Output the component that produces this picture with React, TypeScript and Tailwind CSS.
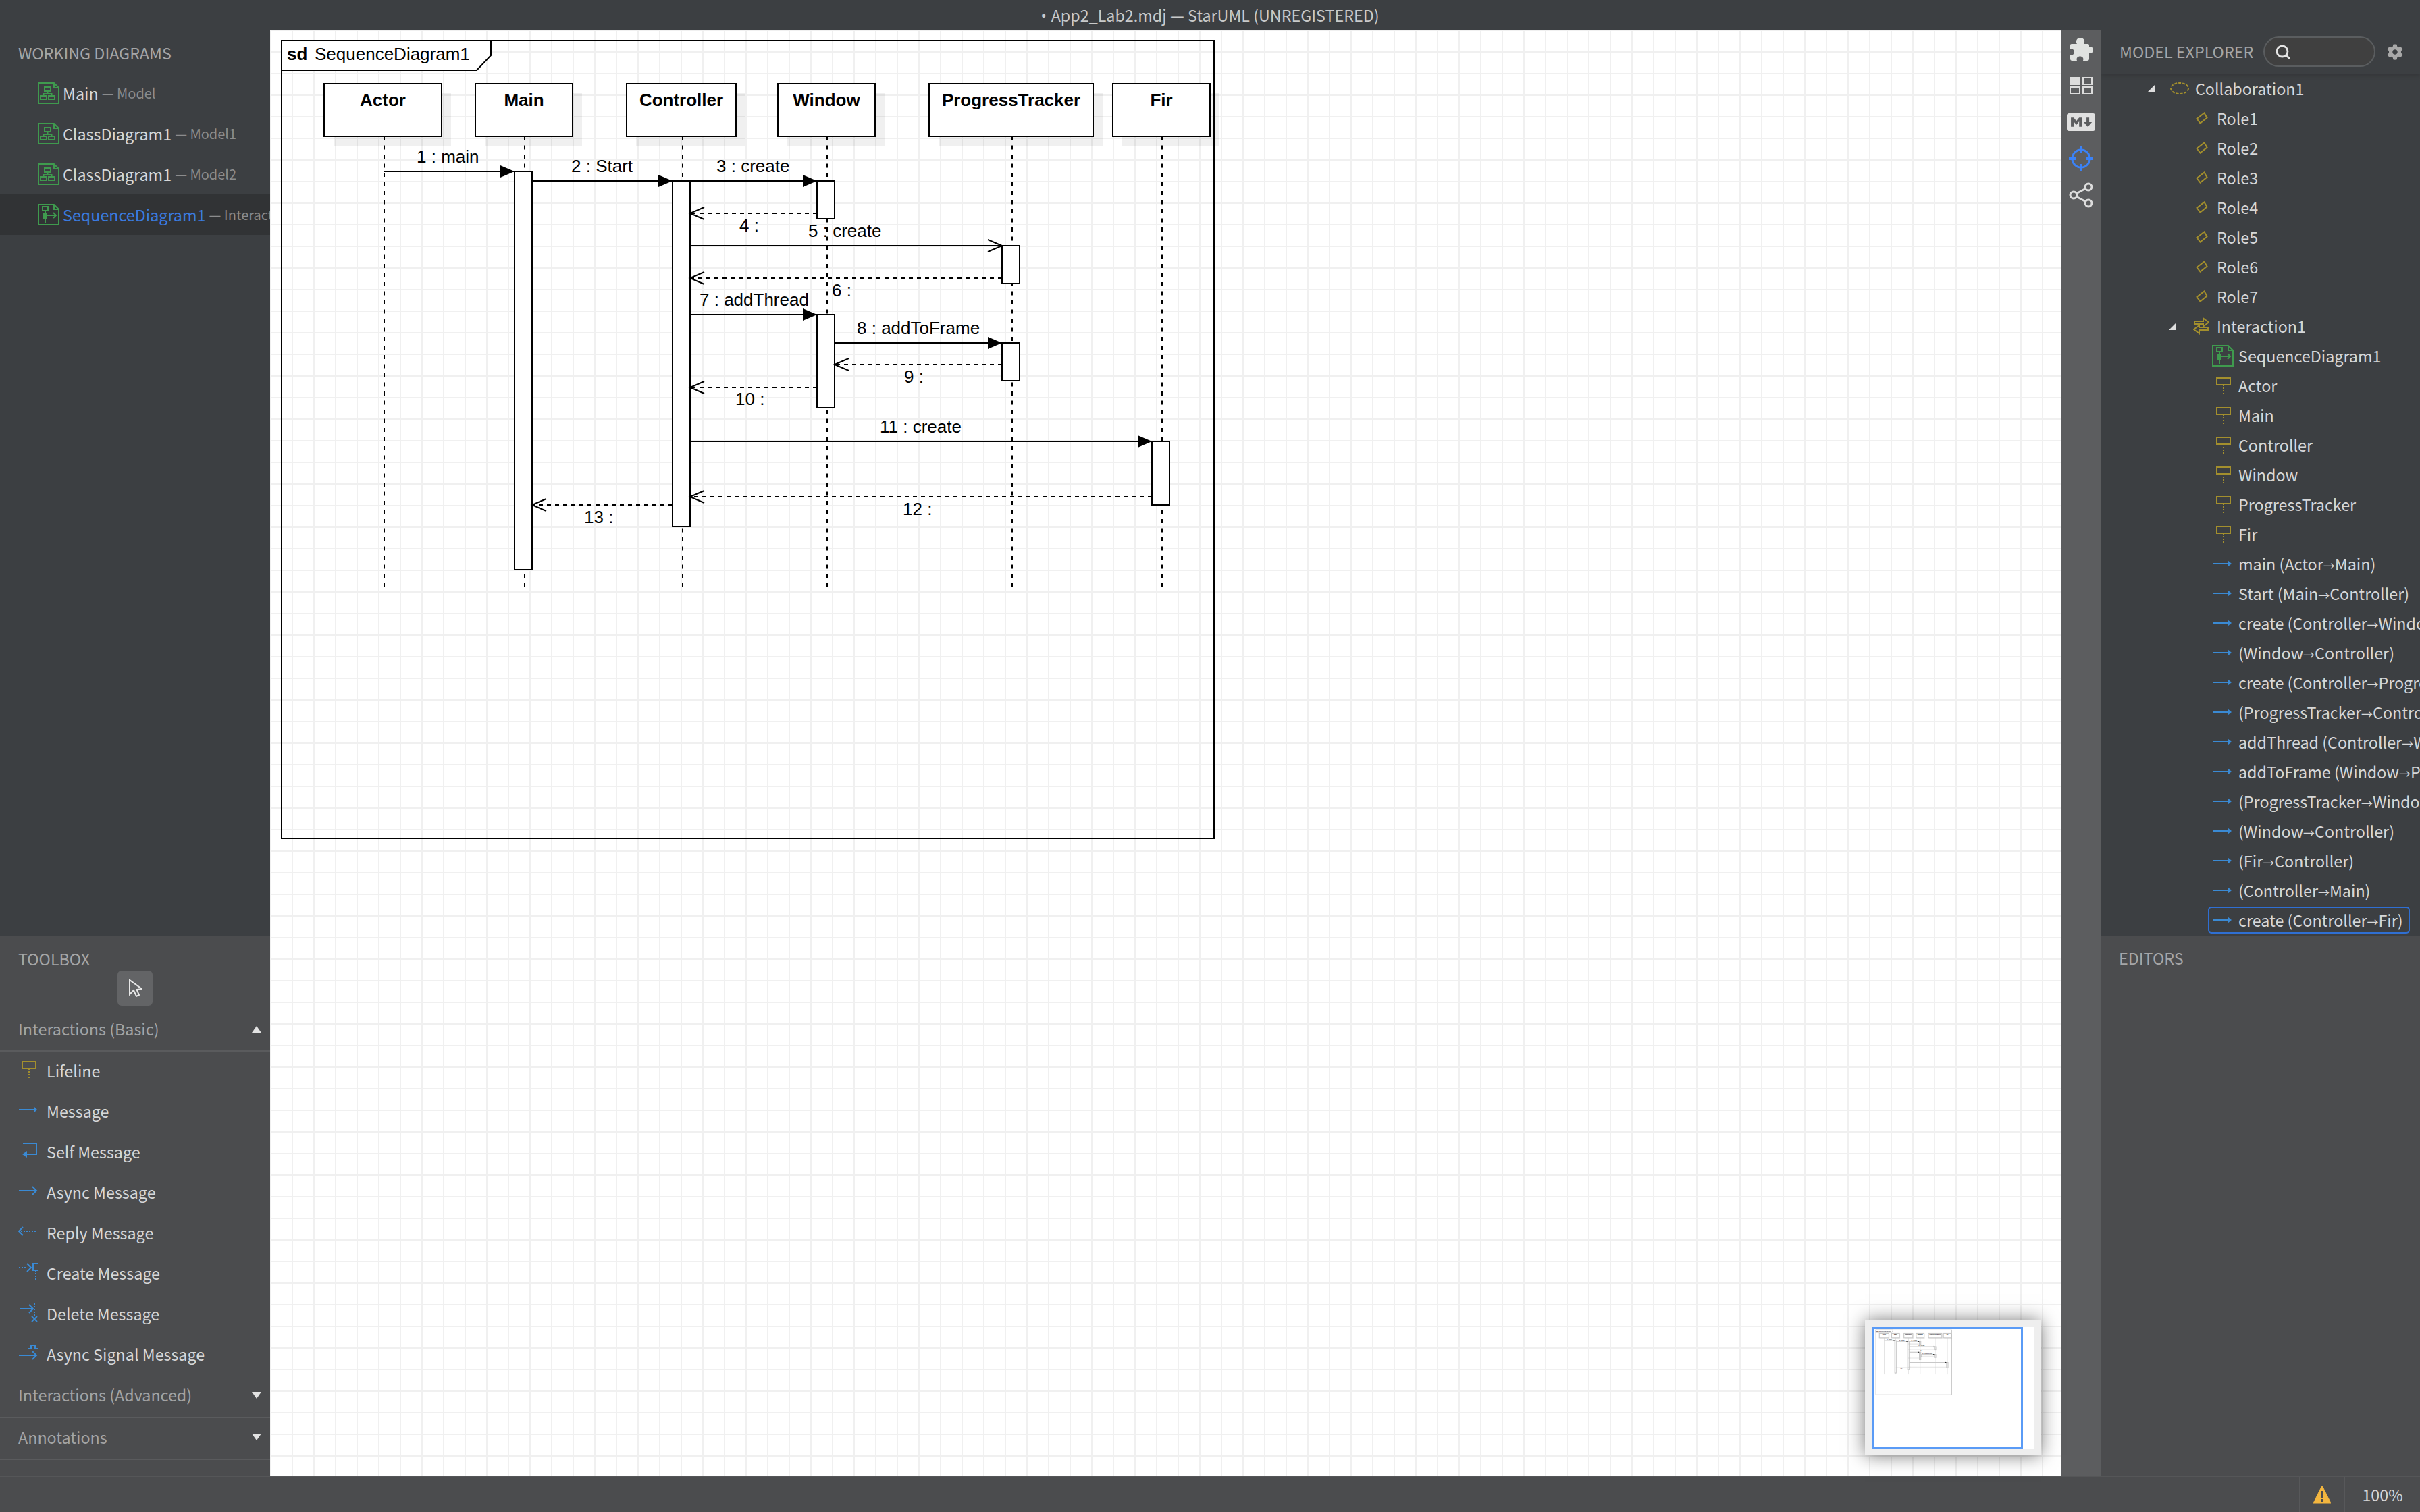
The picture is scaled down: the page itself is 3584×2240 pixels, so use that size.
import { Fragment } from 'react';
import { Search } from 'lucide-react';
import { FaCog, FaMarkdown } from 'react-icons/fa';

const GREEN = '#3f9a4e';
const GOLD = '#a38f2d';
const BLUE = '#3a8ad4';

/* ---------- sequence diagram data, in screen pixels ---------- */

const LIFELINES = [
  { name: 'Actor', left: 480, right: 654, line: 569 },
  { name: 'Main', left: 704, right: 848, line: 777 },
  { name: 'Controller', left: 928, right: 1090, line: 1011 },
  { name: 'Window', left: 1152, right: 1296, line: 1225 },
  { name: 'ProgressTracker', left: 1376, right: 1619, line: 1499 },
  { name: 'Fir', left: 1648, right: 1792, line: 1721 },
];

const ACTIVATIONS = [
  { x: 762, top: 254, bottom: 844 },
  { x: 996, top: 268, bottom: 780 },
  { x: 1210, top: 268, bottom: 324 },
  { x: 1484, top: 364, bottom: 420 },
  { x: 1210, top: 466, bottom: 604 },
  { x: 1484, top: 508, bottom: 564 },
  { x: 1706, top: 654, bottom: 748 },
];

type MessageKind = 'call' | 'async' | 'reply';

const MESSAGES: { from: number; to: number; y: number; kind: MessageKind; label: string; lx: number; ly: number }[] = [
  { from: 569, to: 762, y: 254, kind: 'call', label: '1 : main', lx: 617, ly: 241 },
  { from: 788, to: 996, y: 268, kind: 'call', label: '2 : Start', lx: 846, ly: 255 },
  { from: 1022, to: 1210, y: 268, kind: 'call', label: '3 : create', lx: 1061, ly: 255 },
  { from: 1210, to: 1022, y: 316, kind: 'reply', label: '4 :', lx: 1095, ly: 343 },
  { from: 1022, to: 1484, y: 364, kind: 'async', label: '5 : create', lx: 1197, ly: 351 },
  { from: 1484, to: 1022, y: 412, kind: 'reply', label: '6 :', lx: 1232, ly: 439 },
  { from: 1022, to: 1210, y: 466, kind: 'call', label: '7 : addThread', lx: 1036, ly: 453 },
  { from: 1236, to: 1484, y: 508, kind: 'call', label: '8 : addToFrame', lx: 1269, ly: 495 },
  { from: 1484, to: 1236, y: 540, kind: 'reply', label: '9 :', lx: 1339, ly: 567 },
  { from: 1210, to: 1022, y: 574, kind: 'reply', label: '10 :', lx: 1089, ly: 600 },
  { from: 1022, to: 1706, y: 654, kind: 'call', label: '11 : create', lx: 1303, ly: 641 },
  { from: 1706, to: 1022, y: 736, kind: 'reply', label: '12 :', lx: 1337, ly: 763 },
  { from: 996, to: 788, y: 748, kind: 'reply', label: '13 :', lx: 865, ly: 775 },
];

function Message({ from, to, y, kind, ink, width }: { from: number; to: number; y: number; kind: MessageKind; ink: string; width: number }) {
  const dir = to > from ? -1 : 1;
  return (
    <g>
      <line x1={from} x2={to} y1={y} y2={y} stroke={ink} strokeWidth={width} strokeDasharray={kind === 'reply' ? '6 6' : undefined} />
      {kind === 'call' ? (
        <polygon points={`${to},${y} ${to + dir * 21},${y - 9} ${to + dir * 21},${y + 9}`} fill="#000" />
      ) : (
        <polyline points={`${to + dir * 21},${y - 9} ${to},${y} ${to + dir * 21},${y + 9}`} fill="none" stroke={ink} strokeWidth={width} />
      )}
    </g>
  );
}

// the minimap reuses this with a heavier, paler line
function Diagram({ className, ink = '#000', width = 2 }: { className: string; ink?: string; width?: number }) {
  return (
    <svg viewBox="400 44 2652 2142" className={className} fontFamily="'Liberation Sans', Arial, sans-serif" fontSize={26}>
      <rect x={417} y={60} width={1381} height={1182} fill="none" stroke={ink} strokeWidth={width} />
      <path d="M417 60 H727 V82 L706 104 H417 Z" fill="#fff" stroke={ink} strokeWidth={width} />
      <text x={425} y={89} fontWeight={700}>sd</text>
      <text x={466} y={89}>SequenceDiagram1</text>

      {LIFELINES.map((l) => (
        <rect key={l.name} x={l.left + 14} y={138} width={l.right - l.left} height={78} fill="#000" fillOpacity={0.06} />
      ))}
      {LIFELINES.map((l) => (
        <line key={l.name} x1={l.line} x2={l.line} y1={202} y2={870} stroke={ink} strokeWidth={Math.min(width, 6)} strokeDasharray={width > 2 ? undefined : '6 7.5'} />
      ))}
      {LIFELINES.map((l) => (
        <g key={l.name}>
          <rect x={l.left} y={124} width={l.right - l.left} height={78} fill="#fff" stroke={ink} strokeWidth={width} />
          <text x={(l.left + l.right) / 2} y={157} fontWeight={700} textAnchor="middle">{l.name}</text>
        </g>
      ))}

      {ACTIVATIONS.map((a) => (
        <rect key={`${a.x}-${a.top}`} x={a.x} y={a.top} width={26} height={a.bottom - a.top} fill="#fff" stroke={ink} strokeWidth={width} />
      ))}
      {MESSAGES.map((m) => (
        <g key={m.label}>
          <Message from={m.from} to={m.to} y={m.y} kind={m.kind} ink={ink} width={width} />
          <text x={m.lx} y={m.ly}>{m.label}</text>
        </g>
      ))}
    </svg>
  );
}

/* ---------- small icons ---------- */

function ClassDiagramIcon() {
  return (
    <svg width="32" height="32" viewBox="0 0 32 32" fill="none" stroke={GREEN} strokeWidth="2" className="shrink-0">
      <path d="M1 1 H24 L31 8 V31 H1 Z M24 1 V8 H31" />
      <rect x="10" y="7" width="9" height="6" />
      <path d="M14.5 13 V17 M8.5 20 V17 H20.5 V20" />
      <rect x="4" y="20" width="9" height="5" />
      <rect x="16" y="20" width="9" height="5" />
    </svg>
  );
}

function SequenceDiagramIcon() {
  return (
    <svg width="32" height="32" viewBox="0 0 32 32" fill="none" stroke={GREEN} strokeWidth="2" className="shrink-0">
      <path d="M1 1 H24 L31 8 V31 H1 Z M24 1 V8 H31" />
      <rect x="7" y="4" width="8" height="6" />
      <path d="M11 10 V28 M13 17 H27 M23 13 L27 17 L23 21" />
      <rect x="9" y="15" width="4" height="7" />
    </svg>
  );
}

function LifelineIcon() {
  return (
    <svg width="32" height="32" viewBox="0 0 32 32" fill="none" stroke={GOLD} strokeWidth="2" className="shrink-0">
      <rect x="7" y="5" width="20" height="10" />
      <path d="M17 15 V30" strokeDasharray="2 2" />
    </svg>
  );
}

function ToolIcon({ name }: { name: string }) {
  if (name === 'Lifeline') return <LifelineIcon />;
  return (
    <svg width="32" height="32" viewBox="0 0 32 32" fill="none" stroke={BLUE} strokeWidth="2" className="shrink-0">
      {name === 'Message' && (
        <>
          <path d="M2 16 H25" />
          <polygon points="24,11 29,16 24,21" fill={BLUE} stroke="none" />
        </>
      )}
      {name === 'Self Message' && (
        <>
          <path d="M8 6 H28 V22 H11" />
          <polygon points="7,22 14,17 14,27" fill={BLUE} stroke="none" />
        </>
      )}
      {name === 'Async Message' && <path d="M2 16 H28 M22 10 L28 16 L22 22" />}
      {name === 'Reply Message' && (
        <>
          <path d="M5 16 H28" strokeDasharray="2 2" />
          <path d="M8 10 L2 16 L8 22" />
        </>
      )}
      {name === 'Create Message' && (
        <>
          <path d="M2 10 H14" strokeDasharray="2 2" />
          <path d="M14 4 L20 10 L14 16 M30 4 H23 V14 H30" />
          <path d="M27 14 V28" strokeDasharray="2 2" />
        </>
      )}
      {name === 'Delete Message' && (
        <>
          <path d="M4 11 H23 M17 5 L23 11 L17 17" />
          <path d="M25 3 V21" strokeDasharray="2 2" />
          <path d="M21 22 L29 30 M29 22 L21 30" />
        </>
      )}
      {name === 'Async Signal Message' && <path d="M2 20 H28 M22 14 L28 20 L22 26 M16 10 H20 V5 H26 V10 H30" />}
    </svg>
  );
}

function Chevron({ up }: { up?: boolean }) {
  return (
    <svg width="14" height="10" viewBox="0 0 14 10" className="shrink-0">
      <polygon points={up ? '7,0 14,10 0,10' : '0,0 14,0 7,10'} fill="#e2e2e2" />
    </svg>
  );
}

function PuzzleIcon() {
  return (
    <svg width="36" height="36" viewBox="0 0 36 36" fill="#e0e2e0">
      <path d="M2 12 Q2 10 4 10 H12 C9.5 7 11 1 17 1 C23 1 24.5 7 22 10 H28 Q30 10 30 12 V15 C32.5 13 36 15 36 19 C36 23 32.5 25 30 23 V32 Q30 35 27 35 H21 C22.5 31 20 28.5 16.5 28.5 C13 28.5 10.5 31 12 35 H5 Q2 35 2 32 V26 C5 27.5 8 25.5 8 22 C8 18.5 5 16.5 2 18 Z" />
    </svg>
  );
}

function CrosshairIcon() {
  return (
    <svg width="38" height="38" viewBox="0 0 38 38" fill="none" stroke="#3b82f6">
      <circle cx="19" cy="19" r="13" strokeWidth="3" />
      <path d="M19 1 V11 M19 27 V37 M1 19 H11 M27 19 H37" strokeWidth="4" />
    </svg>
  );
}

function ShareIcon() {
  return (
    <svg width="36" height="38" viewBox="0 0 36 38" fill="none" stroke="#dcdcdc" strokeWidth="3">
      <circle cx="7" cy="19" r="5" />
      <circle cx="29" cy="7" r="5" />
      <circle cx="29" cy="31" r="5" />
      <path d="M11.5 16.5 L24.5 9.5 M11.5 21.5 L24.5 28.5" />
    </svg>
  );
}

function LayoutIcon() {
  return (
    <svg width="34" height="26" viewBox="0 0 34 26" fill="none" stroke="#dcdcdc" strokeWidth="2">
      <rect x="0" y="0" width="16" height="12" fill="#dcdcdc" stroke="none" />
      <rect x="20" y="1" width="13" height="10" />
      <rect x="1" y="15" width="14" height="10" />
      <rect x="20" y="15" width="13" height="10" />
    </svg>
  );
}

/* ---------- left column ---------- */

const WORKING = [
  { name: 'Main', owner: 'Model', seq: false },
  { name: 'ClassDiagram1', owner: 'Model1', seq: false },
  { name: 'ClassDiagram1', owner: 'Model2', seq: false },
  { name: 'SequenceDiagram1', owner: 'Interaction1', seq: true },
];

const TOOLS = ['Lifeline', 'Message', 'Self Message', 'Async Message', 'Reply Message', 'Create Message', 'Delete Message', 'Async Signal Message'];

function WorkingDiagrams() {
  return (
    <div className="h-[1342px] overflow-hidden bg-[#3c3f42]">
      <div className="flex h-[64px] items-center pt-[4px] pl-[27px] text-[23.3px] text-[#a5a6a7]">WORKING DIAGRAMS</div>
      {WORKING.map((d) => (
        <div
          key={d.owner}
          className={`flex h-[60px] items-center gap-[5px] pl-[56px] whitespace-nowrap ${d.seq ? 'bg-[#313335]' : ''}`}
        >
          {d.seq ? <SequenceDiagramIcon /> : <ClassDiagramIcon />}
          <span className={`text-[23.3px] ${d.seq ? 'text-[#3a7be0]' : 'text-[#d6d7d8]'}`}>{d.name}</span>
          <span className="text-[20px] text-[#8b8c8d]">— {d.owner}</span>
        </div>
      ))}
    </div>
  );
}

function SectionHeader({ label, up, size }: { label: string; up?: boolean; size: string }) {
  return (
    <div className={`flex items-center justify-between border-b-2 border-[#5a5b5d] pl-[27px] pr-[13px] ${size}`}>
      <span className="text-[23.3px] text-[#a3a4a5]">{label}</span>
      <Chevron up={up} />
    </div>
  );
}

function Toolbox() {
  return (
    <div className="flex-1 bg-[#4b4c4e]">
      <div className="flex h-[52px] items-end pl-[27px] text-[23.3px] text-[#a5a6a7]">TOOLBOX</div>
      <div className="flex h-[52px] justify-center">
        <div className="flex h-[52px] w-[52px] items-center justify-center rounded-[6px] bg-[#636466]">
          <svg width="21" height="28" viewBox="0 0 21 28" fill="none" stroke="#e8e8e8" strokeWidth="2">
            <path d="M2 2 V23 L8 17 L12 26 L16 24 L12.5 16 L20 15 Z" />
          </svg>
        </div>
      </div>
      <SectionHeader label="Interactions (Basic)" up size="h-[68px] pt-[3px]" />
      {TOOLS.map((t) => (
        <div key={t} className="flex h-[60px] items-center gap-[11px] pl-[26px]">
          <span className="-mt-[8px] flex">
            <ToolIcon name={t} />
          </span>
          <span className="-mt-[4px] text-[23.3px] text-[#d6d7d8]">{t}</span>
        </div>
      ))}
      <SectionHeader label="Interactions (Advanced)" size="h-[63px] pb-[4px]" />
      <SectionHeader label="Annotations" size="h-[62px] pb-[4px]" />
    </div>
  );
}

/* ---------- right column ---------- */

type Row = { label: string; kind: 'collab' | 'role' | 'interaction' | 'seq' | 'life' | 'msg'; selected?: boolean };

const ROWS: Row[] = [
  { label: 'Collaboration1', kind: 'collab' },
  ...['Role1', 'Role2', 'Role3', 'Role4', 'Role5', 'Role6', 'Role7'].map((label): Row => ({ label, kind: 'role' })),
  { label: 'Interaction1', kind: 'interaction' },
  { label: 'SequenceDiagram1', kind: 'seq' },
  ...['Actor', 'Main', 'Controller', 'Window', 'ProgressTracker', 'Fir'].map((label): Row => ({ label, kind: 'life' })),
  ...[
    'main (Actor→Main)',
    'Start (Main→Controller)',
    'create (Controller→Window)',
    '(Window→Controller)',
    'create (Controller→ProgressTracker)',
    '(ProgressTracker→Controller)',
    'addThread (Controller→Window)',
    'addToFrame (Window→ProgressTracker)',
    '(ProgressTracker→Window)',
    '(Window→Controller)',
    '(Fir→Controller)',
    '(Controller→Main)',
  ].map((label): Row => ({ label, kind: 'msg' })),
  { label: 'create (Controller→Fir)', kind: 'msg', selected: true },
];

function Expander() {
  return (
    <svg width="11" height="11" viewBox="0 0 11 11" className="shrink-0">
      <polygon points="11,0 11,11 0,11" fill="#dedede" />
    </svg>
  );
}

// the arrow inside a message name is narrower than the CJK font's own glyph
function TreeLabel({ text }: { text: string }) {
  const parts = text.split('→');
  return (
    <span className="text-[23.3px] whitespace-nowrap text-[#d6d7d8]">
      {parts.map((p, i) => (
        <Fragment key={i}>
          {i > 0 && <span className="text-[17px]">→</span>}
          {p}
        </Fragment>
      ))}
    </span>
  );
}

function TreeRow({ row }: { row: Row }) {
  const label = <TreeLabel text={row.label} />;
  if (row.kind === 'collab') {
    return (
      <div className="flex h-[44px] items-center pl-[68px]">
        <Expander />
        <svg width="28" height="18" viewBox="0 0 28 18" fill="none" stroke={GOLD} strokeWidth="2" strokeDasharray="4 2" className="ml-[23px] mr-[9px] shrink-0">
          <ellipse cx="14" cy="9" rx="13" ry="8" />
        </svg>
        {label}
      </div>
    );
  }
  if (row.kind === 'role') {
    return (
      <div className="flex h-[44px] items-center pl-[140px]">
        <svg width="18" height="18" viewBox="0 0 18 18" fill="none" stroke={GOLD} strokeWidth="2" className="mr-[13px] shrink-0">
          <polygon points="12.5,1.5 16.5,8.5 6.5,16.5 1.5,10" />
        </svg>
        {label}
      </div>
    );
  }
  if (row.kind === 'interaction') {
    return (
      <div className="flex h-[44px] items-center pl-[100px]">
        <Expander />
        <svg width="24" height="26" viewBox="0 0 24 26" fill="none" stroke={GOLD} strokeWidth="2" className="ml-[25px] mr-[11px] shrink-0">
          <path d="M2 10 V6 H15 V1.5 L23 7.5 L15 13.5 V10 H2" />
          <path d="M22 15 V19 H9 V24 L1 18 L9 12 V15 H22" />
        </svg>
        {label}
      </div>
    );
  }
  return (
    <div className="flex h-[44px] items-center pl-[158px]">
      <div className={`flex h-[40px] items-center rounded-[5px] border-2 pl-[6px] pr-[8px] ${row.selected ? 'border-[#2f6fd3]' : 'border-transparent'}`}>
        <span className="flex w-[37px] shrink-0">
          {row.kind === 'seq' && <span className="-ml-[2px] flex"><SequenceDiagramIcon /></span>}
          {row.kind === 'life' && <span className="-ml-[2px] flex"><LifelineIcon /></span>}
          {row.kind === 'msg' && (
            <svg width="27" height="12" viewBox="0 0 27 12">
              <path d="M0 6 H23" stroke={BLUE} strokeWidth="2" />
              <polygon points="21,1 27,6 21,11" fill={BLUE} />
            </svg>
          )}
        </span>
        {label}
      </div>
    </div>
  );
}

function ModelExplorer() {
  return (
    <div className="flex h-[1342px] flex-col overflow-hidden bg-[#3c3f42]">
      <div className="flex h-[65px] shrink-0 items-center pl-[27px] shadow-[0_3px_6px_rgba(0,0,0,0.15)]">
        <span className="w-[213px] shrink-0 text-[23.3px] whitespace-nowrap text-[#a5a6a7]">MODEL EXPLORER</span>
        <div className="flex h-[45px] w-[166px] shrink-0 items-center rounded-full border-2 border-[#5a5d5f] bg-[#404040] pl-[15px]">
          <Search size={24} strokeWidth={2.8} color="#e4e4e4" />
        </div>
        <FaCog size={24} color="#a8a8a8" className="ml-[17px] shrink-0" />
      </div>
      {ROWS.map((r, i) => (
        <TreeRow key={i} row={r} />
      ))}
    </div>
  );
}

export default function App() {
  return (
    <div className="flex h-[2240px] w-[3584px] flex-col overflow-hidden bg-[#3c3f42] font-['Noto_Sans_CJK_SC','Noto_Sans',sans-serif]">
      <div className="flex h-[44px] shrink-0 items-center justify-center text-[23.3px] text-[#c9caca]">
        <span className="mr-[7px] font-['Noto_Sans'] text-[22px]">•</span>
        <span>App2_Lab2.mdj — StarUML (UNREGISTERED)</span>
      </div>

      <div className="flex min-h-0 flex-1">
        <div className="flex w-[400px] shrink-0 flex-col">
          <WorkingDiagrams />
          <Toolbox />
        </div>

        <div className="relative flex-1 bg-white bg-[linear-gradient(to_right,#f0f0f0_2px,transparent_2px),linear-gradient(to_bottom,#f0f0f0_2px,transparent_2px)] bg-[size:32px_32px]">
          <Diagram className="block h-[2142px] w-[2652px]" />
          <div className="absolute right-[30px] bottom-[30px] h-[200px] w-[260px] bg-[#eeeeee] pt-[10px] pl-[11px] shadow-[0_0_26px_rgba(0,0,0,0.55)]">
            <div className="h-[180px] w-[239px] bg-white">
              <div className="h-[180px] w-[223px] border-[3px] border-[#5a9bf6]">
                <Diagram className="block h-[174px] w-[217px]" ink="#c8c8c8" width={14} />
              </div>
            </div>
          </div>
        </div>

        <div className="flex w-[60px] shrink-0 flex-col items-center bg-[#5c5d5f] pt-[2px]">
          <div className="flex h-[54px] items-center"><PuzzleIcon /></div>
          <div className="flex h-[54px] items-center"><LayoutIcon /></div>
          <div className="flex h-[54px] items-center"><FaMarkdown size={42} color="#e0e0e0" /></div>
          <div className="flex h-[54px] items-center"><CrosshairIcon /></div>
          <div className="flex h-[54px] items-center"><ShareIcon /></div>
        </div>

        <div className="flex w-[472px] shrink-0 flex-col">
          <ModelExplorer />
          <div className="flex-1 bg-[#4b4c4e] pt-[16px] pl-[26px]">
            <span className="text-[23.3px] text-[#a5a6a7]">EDITORS</span>
          </div>
        </div>
      </div>

      <div className="flex h-[54px] shrink-0 justify-end border-t-2 border-[#555658] bg-[#4b4c4e]">
        <div className="flex w-[66px] items-center justify-center border-l-2 border-[#57585a]">
          <svg width="28" height="28" viewBox="0 0 28 28">
            <path d="M14 1 L27 27 H1 Z" fill="#f3b63f" stroke="#f3b63f" strokeLinejoin="round" strokeWidth="1" />
            <rect x="12" y="9" width="4" height="10" fill="#4b4c4e" />
            <rect x="12" y="21" width="4" height="4" fill="#4b4c4e" />
          </svg>
        </div>
        <div className="flex w-[113px] items-center justify-center border-l-2 border-[#57585a] text-[23.3px] text-[#d6d7d8]">100%</div>
      </div>
    </div>
  );
}
